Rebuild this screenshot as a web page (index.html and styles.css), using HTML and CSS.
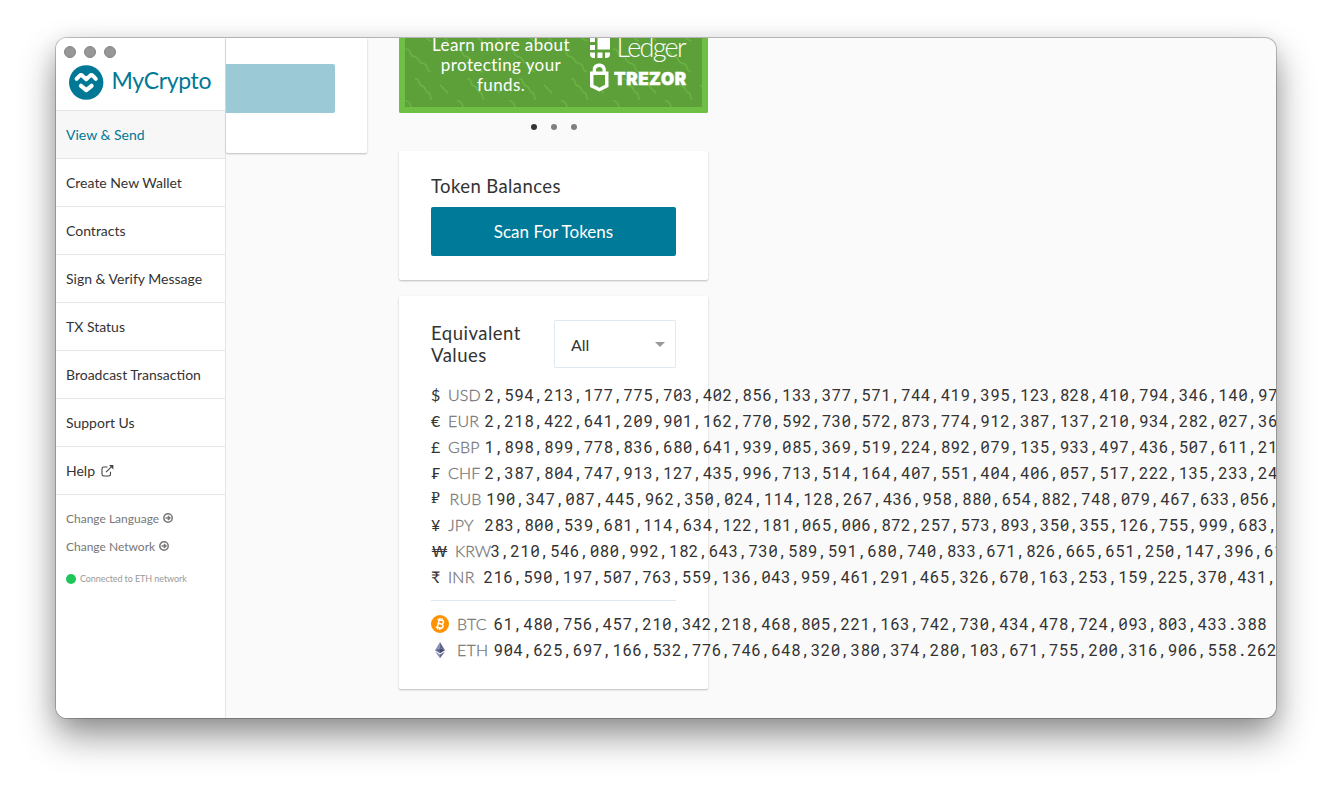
FILE: index.html
```html
<!DOCTYPE html>
<html lang="en">
<head>
<meta charset="utf-8">
<title>MyCrypto</title>
<link rel="stylesheet" href="styles.css">
</head>
<body>
<div class="window">
  <div class="lights"><i></i><i></i><i></i></div>
  <aside class="sidebar">
    <div class="brand">
      <svg class="brand-logo" width="144" height="38" viewBox="0 0 144 38">
        <circle cx="17.2" cy="18.5" r="17.2" fill="#007896"/>
        <path d="M7.600 14.800L10.500 11.900Q12 10.500 13.500 11.900L17.200 15.300L20.900 11.900Q22.400 10.500 23.900 11.900L26.800 14.800" fill="none" stroke="#fff" stroke-width="4" stroke-linecap="round" stroke-linejoin="round"/>
        <path d="M12 21.800L17.300 26.200L22.600 21.800" fill="none" stroke="#fff" stroke-width="4.200" stroke-linecap="round" stroke-linejoin="round"/>
        <text x="42.500" y="25" textLength="100" class="brand-name">MyCrypto</text>
      </svg>
    </div>
    <nav class="nav">
      <a class="nav-item active">View &amp; Send</a>
      <a class="nav-item">Create New Wallet</a>
      <a class="nav-item">Contracts</a>
      <a class="nav-item">Sign &amp; Verify Message</a>
      <a class="nav-item">TX Status</a>
      <a class="nav-item">Broadcast Transaction</a>
      <a class="nav-item">Support Us</a>
      <a class="nav-item">Help
        <svg class="ext" width="13" height="12" viewBox="0 0 13 12"><path d="M6.5 2H2.7Q1 2 1 3.7V9.300Q1 11 2.700 11H7.800Q9.500 11 9.500 9.300V6.800M5 7.200L10.400 1.800" fill="none" stroke="#444" stroke-width="1.100"/><path d="M8 0H12.400V4.400Z" fill="#444"/></svg>
      </a>
    </nav>
    <div class="options">
      <a class="option">Change Language <svg width="10" height="10" viewBox="0 0 10 10"><circle cx="5" cy="5" r="4.200" fill="none" stroke="#777" stroke-width="1.500"/><path d="M2.500 5H7M4.900 2.900L7 5L4.900 7.100" fill="none" stroke="#777" stroke-width="1.400"/></svg></a>
      <a class="option">Change Network <svg width="10" height="10" viewBox="0 0 10 10"><circle cx="5" cy="5" r="4.200" fill="none" stroke="#777" stroke-width="1.500"/><path d="M2.500 5H7M4.900 2.900L7 5L4.900 7.100" fill="none" stroke="#777" stroke-width="1.400"/></svg></a>
      <div class="status"><i class="status-dot"></i>Connected to ETH network</div>
    </div>
  </aside>
  <main class="content">
    <section class="send-card"><div class="send-button"></div></section>
    <div class="column">
      <div class="banner">
        <svg class="waves" width="297" height="69" viewBox="0 0 297 69">
          <defs><pattern id="waves" width="52" height="104" patternUnits="userSpaceOnUse">
            <g fill="none" stroke="#6ab344" stroke-width="1.500">
              <path d="M0 11C7 10 3 18 9 18.500S12 25 18 25.500S20 33 26 34"/>
              <path d="M10 41C16 40 12 47 17 48S19 54 23 54.500S24 61 27 61"/>
              <path d="M0 63C7 62 3 70 9 70.500"/>
              <path d="M35 47L43 55M35 -5L43 3"/>
              <path d="M14 -8C20 -7 18 1 26 3"/>
            </g>
          </pattern></defs>
          <rect width="297" height="69" fill="url(#waves)"/>
        </svg>
        <p class="banner-text">Learn more about protecting your funds.</p>
        <svg class="partners" width="98" height="69" viewBox="0 0 98 69">
          <g fill="#fff">
            <path d="M7.500 0H20V11.500H7.500ZM0 0H5V4H0ZM0 7H5V12H0ZM0 14.500H5V20H4Q0 20 0 16ZM7.500 14.500H12.500V20H7.500ZM15 14.500H20V16Q20 20 16 20H15Z"/>
            <path fill-rule="evenodd" d="M0 33.500H2.700V31.500C2.700 23.500 15.800 23.500 15.800 31.500V33.500H18.500V49L9.300 53.500L0 49ZM6 33.500H12.500V31.500C12.500 28 6 28 6 31.500ZM3.500 37V46.800L9.300 49.800L15 46.800V37Z"/>
          </g>
          <text x="26.500" y="19" textLength="70" class="ledger">Ledger</text>
          <text x="24" y="47" textLength="72" class="trezor">TREZOR</text>
        </svg>
      </div>
      <div class="dots"><i class="on"></i><i></i><i></i></div>
      <section class="card">
        <h2 class="title">Token Balances</h2>
        <button class="scan">Scan For Tokens</button>
      </section>
      <section class="card values">
        <div class="values-head">
          <h2 class="title">Equivalent Values</h2>
          <div class="select">All<i class="caret"></i></div>
        </div>
        <ul class="rates">
          <li><span class="sym">$</span><span class="code">USD</span><span class="num">2,594,213,177,775,703,402,856,133,377,571,744,419,395,123,828,410,794,346,140,97</span></li>
          <li><span class="sym">€</span><span class="code">EUR</span><span class="num">2,218,422,641,209,901,162,770,592,730,572,873,774,912,387,137,210,934,282,027,36</span></li>
          <li><span class="sym">£</span><span class="code">GBP</span><span class="num">1,898,899,778,836,680,641,939,085,369,519,224,892,079,135,933,497,436,507,611,21</span></li>
          <li><span class="sym">₣</span><span class="code">CHF</span><span class="num">2,387,804,747,913,127,435,996,713,514,164,407,551,404,406,057,517,222,135,233,24</span></li>
          <li class="rub"><span class="sym">₽</span><span class="code">RUB</span><span class="num">190,347,087,445,962,350,024,114,128,267,436,958,880,654,882,748,079,467,633,056,</span></li>
          <li><span class="sym">¥</span><span class="code">JPY</span><span class="num">283,800,539,681,114,634,122,181,065,006,872,257,573,893,350,355,126,755,999,683,</span></li>
          <li class="krw"><span class="sym">₩</span><span class="code">KRW</span><span class="num">3,210,546,080,992,182,643,730,589,591,680,740,833,671,826,665,651,250,147,396,61</span></li>
          <li class="inr"><span class="sym">₹</span><span class="code">INR</span><span class="num">216,590,197,507,763,559,136,043,959,461,291,465,326,670,163,253,159,225,370,431,</span></li>
        </ul>
        <ul class="rates crypto">
          <li><span class="sym"><svg width="18" height="18" viewBox="0 0 18 18"><circle cx="9" cy="9" r="9" fill="#ff9200"/><g transform="rotate(13 9 9)" fill="none" stroke="#fff" stroke-width="1.500"><path d="M5.500 5H10C12.700 5 12.700 8.700 10 8.700H7.200M10 8.700C13.300 8.700 13.300 12.900 10 12.900H5.500M7.200 5V12.900M7.800 3V5M10 3V5M7.800 12.900V15M10 12.900V15"/></g></svg></span><span class="code">BTC</span><span class="num">61,480,756,457,210,342,218,468,805,221,163,742,730,434,478,724,093,803,433.388</span></li>
          <li><span class="sym"><svg width="18" height="18" viewBox="0 0 18 18"><path d="M9 1L4 9.300L9 7Z" fill="#8a92b2"/><path d="M9 1L14 9.300L9 7Z" fill="#62688f"/><path d="M9 7L4 9.300L9 12.300Z" fill="#62688f"/><path d="M9 7L14 9.300L9 12.300Z" fill="#454a75"/><path d="M4 10.500L9 13.500V17.300Z" fill="#8a92b2"/><path d="M14 10.500L9 13.500V17.300Z" fill="#62688f"/></svg></span><span class="code">ETH</span><span class="num">904,625,697,166,532,776,746,648,320,380,374,280,103,671,755,200,316,906,558.262</span></li>
        </ul>
      </section>
    </div>
  </main>
</div>
</body>
</html>
```
FILE: styles.css
```css
* { box-sizing: border-box; }
body {
  margin: 0;
  padding: 38px 56px 0;
  height: 792px;
  overflow: hidden;
  background: #fff;
  font-family: Lato, sans-serif;
  color: #333;
}
.window {
  position: relative;
  display: flex;
  width: 1220px;
  height: 680px;
  overflow: hidden;
  border-radius: 11px;
  background: #fafafa;
  box-shadow: 0 0 0 1px rgba(0, 0, 0, .22), 0 18px 36px rgba(0, 0, 0, .42), 0 4px 20px rgba(0, 0, 0, .1);
}
.lights {
  position: absolute;
  top: 8px;
  left: 8px;
  display: flex;
  gap: 8px;
}
.lights i {
  width: 12px;
  height: 12px;
  border: 1px solid #858585;
  border-radius: 50%;
  background: #979797;
}
.sidebar {
  width: 170px;
  flex: none;
  border-right: 1px solid #e5e5e5;
  background: #fff;
}
.brand { height: 72px; padding: 26px 0 0 13px; }
.brand-logo { display: block; }
.brand-name { font: 400 23px Lato, sans-serif; fill: #007896; }
.nav-item {
  display: flex;
  align-items: center;
  gap: 6px;
  height: 48px;
  padding: 0 10px;
  border-top: 1px solid #e5e5e5;
  font-size: 14px;
}
.nav-item:last-child { height: 49px; border-bottom: 1px solid #e5e5e5; }
.active { background: #f7f7f7; color: #007896; }
.options { padding: 9px 10px 0; color: #777; }
.option { display: flex; align-items: center; gap: 4px; height: 28px; font-size: 12px; }
.status { display: flex; align-items: center; gap: 4px; height: 37px; font-size: 9px; letter-spacing: -.08px; color: #999; }
.status-dot { width: 10px; height: 10px; border-radius: 50%; background: #20c65a; }
.content { display: flex; gap: 32px; width: 1050px; flex: none; }
.send-card {
  width: 141px;
  height: 115px;
  padding-top: 26px;
  border-radius: 0 0 2px 2px;
  background: #fff;
  box-shadow: 0 1px 2px rgba(0, 0, 0, .25);
}
.send-button { width: 109px; height: 49px; border-radius: 0 2px 2px 0; background: #9bc9d5; }
.column { width: 309px; flex: none; }
.banner {
  position: relative;
  display: flex;
  height: 75px;
  border: solid #6fbf45;
  border-width: 0 6px 6px;
  border-radius: 0 0 2px 2px;
  background: #5da03a;
  color: #fff;
}
.waves { position: absolute; inset: 0; }
.banner-text {
  position: relative;
  width: 150px;
  margin: -3px 0 0 21px;
  font-size: 17px;
  line-height: 20px;
  letter-spacing: .4px;
  text-align: center;
}
.partners { position: relative; margin-left: 14px; overflow: visible; }
.ledger { font: 300 27px Lato, sans-serif; fill: #fff; }
.trezor { font: 900 17px Inter, sans-serif; fill: #fff; stroke: #fff; stroke-width: .5px; }
.dots { display: flex; justify-content: center; gap: 14px; height: 38px; padding-top: 11px; }
.dots i { width: 6px; height: 6px; border-radius: 50%; background: #808080; }
.dots .on { background: #333; }
.card {
  height: 129px;
  padding: 24px 32px;
  border-radius: 2px;
  background: #fff;
  box-shadow: 0 1px 2px rgba(0, 0, 0, .25);
}
.title { margin: 0; font-size: 18.500px; font-weight: 400; line-height: 22px; letter-spacing: .4px; }
.scan {
  display: block;
  width: 100%;
  height: 49px;
  margin-top: 10px;
  border: 0;
  border-radius: 2px;
  background: #007a99;
  color: #fff;
  font: 17px Lato, sans-serif;
}
.values { height: 393px; margin-top: 16px; }
.values-head { display: flex; justify-content: space-between; align-items: center; height: 48px; }
.values-head .title { width: 110px; letter-spacing: .5px; }
.select {
  display: flex;
  justify-content: space-between;
  align-items: center;
  width: 122px;
  height: 48px;
  padding: 0 10px 0 16px;
  border: 1px solid #dfe9f3;
  border-radius: 1px;
  font-size: 16px;
}
.caret { border: 5px solid transparent; border-top-color: #999; border-bottom: 0; }
.rates { margin: 13px 0 0; padding: 0; list-style: none; }
.rates li { display: flex; align-items: center; height: 26px; white-space: nowrap; font-size: 16px; }
.sym { width: 17px; flex: none; font-family: Lato, "Noto Sans", sans-serif; }
.code { width: 36.500px; flex: none; color: #777; font-weight: 300; letter-spacing: .2px; -webkit-text-stroke: .3px #777; }
.rub .sym { width: 18.500px; font-family: "DejaVu Serif", serif; font-size: 14px; }
.krw .sym { width: 24px; }
.krw .code { width: 35.500px; letter-spacing: 0; }
.inr .code { width: 35.500px; }
.num { font-family: "Roboto Mono", "DejaVu Sans Mono", monospace; font-size: 16px; letter-spacing: .315px; }
.crypto { margin-top: 11px; padding-top: 10px; border-top: 1px solid #dfe9f0; }
.crypto .sym { width: 26px; }
.crypto .code, .crypto .num { padding-bottom: 2px; }
.crypto svg { display: block; }
```
